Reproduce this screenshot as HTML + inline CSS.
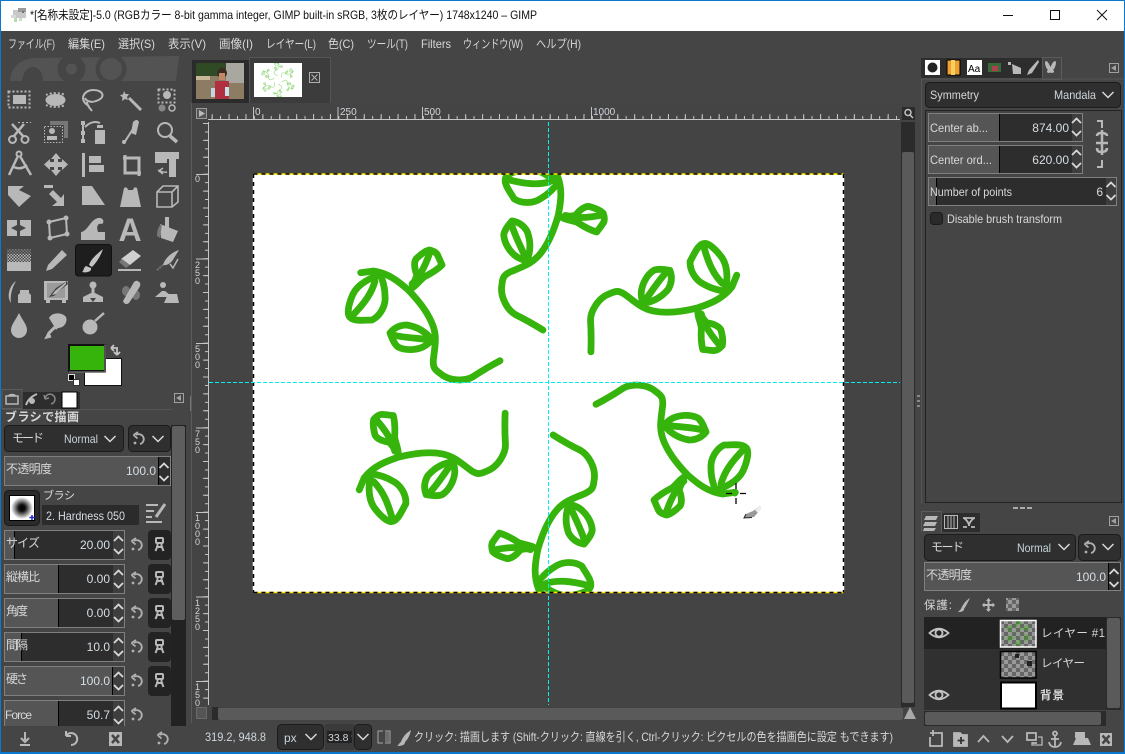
<!DOCTYPE html>
<html lang="ja">
<head>
<meta charset="utf-8">
<title>GIMP</title>
<style>
html,body{margin:0;padding:0;background:#454545;width:1125px;height:754px;overflow:hidden}
svg{display:block}
text{font-family:"Liberation Sans","Noto Sans CJK JP",sans-serif;font-size:12px;fill:#d8d8d8}
.r{text-anchor:end}
.s{font-size:11px}
.n{font-size:9px;fill:#cfd6dc}
.b{fill:none;stroke:#808080}
.ic{fill:#b8b8b8;stroke:none}
.st{fill:none;stroke:#b8b8b8;stroke-width:2}
</style>
</head>
<body>
<svg xmlns="http://www.w3.org/2000/svg" width="1125" height="754" viewBox="0 0 1125 754">
<defs>
<clipPath id="cv"><rect x="254" y="174" width="589" height="418"/></clipPath>
<clipPath id="zc"><rect x="327" y="731" width="25" height="12"/></clipPath>
<pattern id="chk" width="8" height="8" patternUnits="userSpaceOnUse"><rect width="8" height="8" fill="#666"/><rect width="4" height="4" fill="#999"/><rect x="4" y="4" width="4" height="4" fill="#999"/></pattern>
<pattern id="dit" width="3" height="3" patternUnits="userSpaceOnUse"><rect width="3" height="3" fill="#454545"/><rect width="1.500" height="1.500" fill="#b8b8b8"/><rect x="1.500" y="1.500" width="1.500" height="1.500" fill="#b8b8b8"/></pattern>
<g id="vine" fill="none" stroke="#36b40c" stroke-width="6.800" stroke-linecap="round" stroke-linejoin="round">
<path d="M500,360.7 C488,367 480,372 473,376.7 C466,381 450,382 440,373.3 C434,369 433,367 433.3,360 C435,345 437,338 433.3,326.7 C429,314 418,300 408.3,290 C398,281 388,273 373.3,271 L360.7,272.7"/>
<path d="M383,275 C372,276 358,284 353,294 C349,303 347,312 349,316 C352,322 364,320 372,320 C380,316 386,306 385,296 C385,288 383,282 382,279"/>
<path d="M375,281 C372,292 366,302 351,317"/>
<path d="M412,288 L417,275 C414,268 414,262 416,259 C420,255 425,251 429,250 C434,251 437,253 438,256 C440,260 441,263 442,265 C437,270 430,274 424,277 C420,280 416,286 412,288"/>
<path d="M412,284 C418,278 424,270 430,252"/>
<path d="M432,340 C426,332 418,327 407,325 C400,325 394,328 390,333 C392,338 394,344 398,347 C406,351 416,350 423,347 C427,345 430,342 432,340"/>
<path d="M393,335 C405,338 418,338 432,340"/>
</g>
<g id="art">
<use href="#vine"/>
<use href="#vine" transform="rotate(60 548 382.5)"/>
<use href="#vine" transform="rotate(120 548 382.5)"/>
<use href="#vine" transform="rotate(180 548 382.5)"/>
<use href="#vine" transform="rotate(240 548 382.5)"/>
<use href="#vine" transform="rotate(300 548 382.5)"/>
</g>
<g id="spin" fill="none" stroke="#d8d8d8" stroke-width="1.800"><polyline points="-4.500,-2 0,-6.500 4.500,-2"/><polyline points="-4.500,6 0,10.500 4.500,6"/></g>
<polyline id="chev" points="-5.5,-3 0,2.5 5.5,-3" fill="none" stroke="#d8d8d8" stroke-width="1.5"/>
<g id="reset" fill="none" stroke="#b0b0b0" stroke-width="1.8"><path d="M-3,-4 A5,5 0 1 1 1,5"/><path d="M-5.5,-4 L-1,-7 M-5.5,-4 L-1.5,-0.5"/><circle cx="-4" cy="4" r="1.4" fill="#b0b0b0" stroke="none"/></g>
<g id="link"><rect x="-11.5" y="-15" width="23" height="30" rx="4" fill="#232323"/><g fill="none" stroke="#b8b8b8" stroke-width="2"><rect x="-3.5" y="-7" width="7" height="5" rx="1"/><path d="M-2,-2 L-2,1 L-4,6 M2,-2 L2,1 L4,6 M-3.5,2 H3.5"/></g></g>
<g id="eye" fill="none" stroke="#c4c4c4" stroke-width="1.8"><path d="M-9.5,0 Q0,-8.5 9.5,0 Q0,8.5 -9.5,0 Z"/><circle r="3.5"/></g>
</defs>

<!-- window chrome -->
<rect width="1125" height="754" fill="#454545"/>
<rect width="1125" height="31" fill="#fff"/>
<rect width="1125" height="1" fill="#0b78d0"/>
<rect y="0" width="1" height="754" fill="#0b78d0"/>
<rect x="1124" y="0" width="1" height="754" fill="#0b78d0"/>
<rect y="752" width="1125" height="2" fill="#0b78d0"/>
<g transform="translate(11,8)"><rect x="2" y="2" width="13" height="8" fill="#c8c8c8"/><rect x="7" y="0" width="8" height="4" fill="#999"/><rect x="0" y="7" width="5" height="3" fill="#d8d8d8"/><rect x="3" y="10" width="3" height="4" fill="#bcd8b4"/><rect x="8" y="10" width="3" height="3" fill="#c8e0c0"/><rect x="11" y="3" width="2" height="2" fill="#777"/></g>
<text x="30" y="19" textLength="507" lengthAdjust="spacingAndGlyphs" style="fill:#111">*[名称未設定]-5.0 (RGBカラー 8-bit gamma integer, GIMP built-in sRGB, 3枚のレイヤー) 1748x1240 – GIMP</text>
<path d="M1003,15.5 H1013" stroke="#111" fill="none"/>
<rect x="1050.5" y="10.5" width="9" height="9" fill="none" stroke="#111"/>
<path d="M1097,10 L1107,20 M1107,10 L1097,20" stroke="#111" fill="none"/>

<!-- menu -->
<g>
<text x="8" y="48" textLength="47" lengthAdjust="spacingAndGlyphs">ファイル(F)</text>
<text x="68" y="48" textLength="37" lengthAdjust="spacingAndGlyphs">編集(E)</text>
<text x="118" y="48" textLength="37" lengthAdjust="spacingAndGlyphs">選択(S)</text>
<text x="168" y="48" textLength="38" lengthAdjust="spacingAndGlyphs">表示(V)</text>
<text x="219" y="48" textLength="34" lengthAdjust="spacingAndGlyphs">画像(I)</text>
<text x="266" y="48" textLength="50" lengthAdjust="spacingAndGlyphs">レイヤー(L)</text>
<text x="328" y="48" textLength="26" lengthAdjust="spacingAndGlyphs">色(C)</text>
<text x="367" y="48" textLength="41" lengthAdjust="spacingAndGlyphs">ツール(T)</text>
<text x="421" y="48" textLength="30" lengthAdjust="spacingAndGlyphs">Filters</text>
<text x="463" y="48" textLength="60" lengthAdjust="spacingAndGlyphs">ウィンドウ(W)</text>
<text x="536" y="48" textLength="45" lengthAdjust="spacingAndGlyphs">ヘルプ(H)</text>
</g>

<!-- wilber logo -->
<path d="M10,81 C11,66 22,58 36,58 L179,56 L176,81 Z" fill="#535353"/>
<path d="M22,81 C23,72 28,67 33,67 C39,67 43,73 43,81 Z" fill="#454545"/>
<circle cx="71.5" cy="69" r="14" fill="#454545"/><circle cx="71.5" cy="69" r="5.5" fill="#535353"/>
<circle cx="111" cy="69" r="15.5" fill="#454545"/><circle cx="111" cy="69" r="11" fill="#535353"/>

<!-- toolbox icons -->
<g class="ic">
<!-- row 1 -->
<rect x="8.5" y="91.5" width="21" height="16" fill="none" stroke="#b8b8b8" stroke-width="2" stroke-dasharray="2 2"/>
<rect x="13" y="95" width="13" height="9"/>
<ellipse cx="55.5" cy="100" rx="10" ry="6"/>
<path d="M46,95 A13,6 0 0 1 65,95 M46,105 A13,6 0 0 0 65,105" fill="none" stroke="#b8b8b8" stroke-width="2" stroke-dasharray="2 2"/>
<path d="M89,106 C78,100 84,90 93,90 C104,90 106,98 96,101 C91,103 86,101 85,98 M87,102 C87,106 90,108 92,111" class="st"/>
<path d="M124,91 L125.5,94 L129,94 L127,97 L128,100 L125,99 L122,101 L122.5,97.5 L120,95 L123,94.5 Z"/>
<path d="M129,98 L141,110" stroke="#b8b8b8" stroke-width="3" fill="none"/>
<rect x="158.5" y="89.5" width="16" height="13" fill="none" stroke="#b8b8b8" stroke-width="2" stroke-dasharray="2 2"/>
<circle cx="167" cy="95" r="4"/><circle cx="162" cy="108" r="3.5" fill="#888"/><circle cx="172" cy="108" r="3" fill="none" stroke="#b8b8b8" stroke-width="1.5"/>
<!-- row 2 -->
<g class="st"><circle cx="12.5" cy="139.5" r="3.5"/><circle cx="25" cy="139.5" r="3.5"/><path d="M14,136 L24,124 M23,136 L12,124" stroke-width="2.5"/></g>
<path d="M18,122.5 H31" stroke="#b8b8b8" stroke-dasharray="2 2" fill="none"/>
<path d="M50,121 H68 V138 H64 V125 H50 Z" fill="#777"/>
<rect x="44.5" y="126.5" width="18" height="16" fill="none" stroke="#b8b8b8" stroke-dasharray="1.5 1.5"/>
<circle cx="52" cy="131" r="3"/><path d="M47,140 V136 H57 V140 Z"/>
<rect x="81" y="121" width="4" height="4"/><rect x="81" y="131" width="4" height="4"/><rect x="81" y="139" width="4" height="4"/>
<path d="M83,125 V139 M85,127 C90,122 95,121 100,123" class="st" stroke-width="1.3"/>
<path d="M97,128 H103 V125 H97 Z M95,130 H105 V144 H95 Z"/>
<path d="M124,143 L133,129" fill="none" stroke="#b8b8b8" stroke-width="2"/>
<path d="M131,133 L133,122 Q137,118 139,122 L136,135 Z"/>
<circle cx="124" cy="142" r="2"/>
<circle cx="165" cy="130" r="7" class="st" stroke-width="3"/><path d="M170,136 L177,142" fill="none" stroke="#b8b8b8" stroke-width="3.5"/>
<!-- row 3 -->
<circle cx="19" cy="154" r="2.5" class="st" stroke-width="1.5"/>
<path d="M17.5,157 L9,175 M20.5,157 L31,175 M12,166 Q20,171 27,165" fill="none" stroke="#b8b8b8" stroke-width="2.5"/>
<path d="M56,153 L61,159 H58 V162 H62 V159 L68,164.5 L62,170 V167 H58 V170 H61 L56,176 L51,170 H54 V167 H50 V170 L44,164.5 L50,159 V162 H54 V159 H51 Z"/>
<rect x="82" y="153" width="3" height="24"/><rect x="89" y="156" width="12" height="7"/><rect x="89" y="165" width="15" height="7"/>
<path d="M125,155 V173 H141 M123,158 H139 V176" fill="none" stroke="#b8b8b8" stroke-width="3"/>
<path d="M155,152 H179 V159 H176 V177 H169 V159 H167 V163 H155 Z"/>
<path d="M158,170 Q164,173 167,172 M163,168 L159,171 L163,174" fill="none" stroke="#b8b8b8" stroke-width="1.5"/>
<!-- row 4 -->
<path d="M8,195 V186 H24 L19,190 L31,196 L19,207 L8,195 Z"/>
<path d="M44,185 H53 V188 H44 Z M53,190 L61,198 L64,194 V206 H52 L57,202 L49,194 Z"/>
<path d="M82,186 H92 L105,205 H82 Z"/>
<path d="M120,207 L124,188 Q127,186 128,190 H133 Q134,186 137,188 L141,207 Z"/>
<path d="M157,192 L163,186 H178 V202 L172,207 H157 Z M157,192 H172 V207 M172,192 L178,186" fill="none" stroke="#b8b8b8" stroke-width="1.6"/>
<!-- row 5 -->
<path d="M7,220 H17 V225 L11,228 L17,231 V236 H7 Z M20,220 H31 V236 H20 V231 L26,228 L20,225 Z"/>
<path d="M49,222 L66,218 L67,234 L50,238 Z" fill="none" stroke="#b8b8b8" stroke-width="2"/>
<circle cx="49" cy="222" r="2.5"/><circle cx="66" cy="218" r="2.5"/><circle cx="67" cy="234" r="2.5"/><circle cx="50" cy="238" r="2.5"/>
<path d="M81,240 V232 C88,231 90,220 98,218 C103,217 105,222 102,224 C98,223 96,226 98,232 H105 V240 Z"/>
<text x="118.500" y="241" style="font-size:32px;font-weight:bold;fill:#b8b8b8">A</text>
<path d="M165,217 H169 V229 H165 Z"/>
<path d="M160,224 L178,231 L173,242 L161,238 Z"/><path d="M157,236 C157,229 159,225 162,224 L160,238 Z" fill="#777"/>
<!-- row 6 -->
<rect x="7" y="249" width="24" height="5" fill="url(#dit)" opacity=".45"/>
<rect x="7" y="254" width="24" height="8" fill="url(#dit)"/>
<rect x="7" y="262" width="24" height="9"/>
<path d="M46,271 L48,265 L62,250 L67,255 L52,269 Z"/>
</g>
<rect x="75.500" y="244.500" width="36" height="31.500" rx="3" fill="#1e1e1e" stroke="#111"/>
<path d="M103,249 C97,254 91,259 89,265 L92,267 C97,262 101,255 103,249 Z M86,266 C83,268 84,271 82,272 C86,273 92,272 91,268 Z" fill="#c4c4c4"/>
<g class="ic">
<path d="M121,259 L133,250 L141,256 L130,265 Z" fill="#d0d0d0"/><path d="M122,259 L130,265 L126,268 L119,262 Z" fill="#777"/><rect x="118" y="269" width="23" height="2"/>
<path d="M179,250 C172,252 165,258 163,265 C168,266 172,262 174,258 Z"/><path d="M157,270 L163,265" stroke="#777" stroke-width="2" stroke-dasharray="2 1"/><path d="M170,264 L173,268 L178,259" fill="none" stroke="#b8b8b8" stroke-width="1.5"/>
<!-- row 7 -->
<path d="M16,281 C10,285 6,296 11,303 C10,295 12,288 16,281 Z"/><path d="M20,290 H29 V293 L31,295 V303 H18 V295 L20,293 Z"/>
<path d="M44,281 H68 V300 H44 Z"/><path d="M47,298 H65 V283 H47 Z" fill="#454545" opacity=".25"/>
<path d="M67,281 L56,288 L52,293 L49,297 L54,296 L59,291 L68,284 Z" fill="#454545"/><path d="M66,282 L55,291 L52,295 L56,294 L66,284 Z"/>
<rect x="46" y="300" width="4" height="3"/><rect x="62" y="300" width="4" height="3"/>
<circle cx="93" cy="285" r="3.500"/><rect x="91.500" y="288" width="3" height="5"/><path d="M83,302 V297 L91,293 H95 L103,297 V302 Z"/><path d="M90,298 H96 L93,302 Z" fill="#454545"/>
<ellipse cx="126" cy="291" rx="4" ry="5" fill="#777"/><ellipse cx="136" cy="295" rx="4" ry="5" fill="#777"/>
<path d="M123,301 L134,282 Q137,279 140,283 Q141,285 139,288 L129,303 Q126,305 124,303 Z"/>
<circle cx="163" cy="285" r="3"/><path d="M155,297 L162,291 H165 L170,295 V297 Z"/><path d="M168,294 H177 L179,303 H164 Z"/>
<!-- row 8 -->
<path d="M19,313 C23,321 27,325 27,330 A8,8 0 0 1 11,330 C11,325 15,321 19,313 Z"/>
<path d="M49,318 C52,312 62,312 66,317 C68,322 64,328 58,328 L56,330 L54,326 Z"/><path d="M55,327 L49,333 L47,337 L51,336" stroke="#b8b8b8" stroke-width="3" fill="none"/>
<circle cx="90" cy="327" r="7.500"/><path d="M95,321 L104,313" stroke="#b8b8b8" stroke-width="2.500" fill="none"/>
</g>

<!-- fg / bg -->
<rect x="84.500" y="358.500" width="37" height="27" fill="#fff" stroke="#111"/>
<rect x="68.500" y="344.500" width="37" height="27" fill="#36b40c" stroke="#111"/>
<rect x="69.500" y="345.500" width="35" height="25" fill="none" stroke="#111"/>
<path d="M105,344.500 V372 H69" fill="none" stroke="#666" stroke-width="1.500"/>
<path d="M111,348 H117 V355 M111,348 L114,345 M111,348 L114,351 M117,355 L114,352 M117,355 L120,352" fill="none" stroke="#c4c4c4" stroke-width="1.800"/>
<rect x="68.500" y="374.500" width="6" height="6" fill="#000" stroke="#ddd"/>
<rect x="73.500" y="379.500" width="6" height="6" fill="#fff" stroke="#333"/>

<!-- tool options tabs -->
<rect x="22" y="392" width="58" height="17" fill="#2d2d2d"/>
<rect x="2" y="389.500" width="20" height="19" fill="#454545" stroke="#5c5c5c"/>
<path d="M6,396 H18 V404 H6 Z M8,396 Q12,393 16,396" fill="none" stroke="#b8b8b8" stroke-width="1.500"/>
<path d="M26,405 C28,399 32,396 37,394" stroke="#b8b8b8" stroke-width="2" fill="none"/><circle cx="32" cy="401" r="3" fill="#b8b8b8"/>
<path d="M45,399 A5,5 0 1 1 51,404 M45,399 L44,395 M45,399 L49,398" stroke="#888" stroke-width="1.500" fill="none"/>
<rect x="62" y="392" width="15" height="16" fill="#fff" stroke="#000"/>
<rect x="174.500" y="393.500" width="9" height="9" fill="none" stroke="#a0a0a0"/><path d="M181,395 L176,398 L181,401 Z" fill="#a0a0a0"/>
<rect x="190" y="396" width="1.500" height="15" fill="#777"/>
<rect x="191" y="103" width="1" height="620" fill="#5a5a5a"/>

<!-- tool options -->
<rect x="2" y="409" width="170" height="1" fill="#555"/>
<text x="5" y="421" textLength="74" style="font-weight:bold">ブラシで描画</text>
<rect x="4.500" y="425.500" width="119" height="26" rx="4" fill="#2f2f2f" stroke="#1b1b1b"/>
<text x="12" y="442" textLength="32">モード</text>
<text x="64" y="443" textLength="34" lengthAdjust="spacingAndGlyphs" style="fill:#c8d4dc">Normal</text>
<use href="#chev" x="110" y="439"/>
<rect x="128.500" y="425.500" width="42" height="26" rx="4" fill="#2f2f2f" stroke="#1b1b1b"/>
<use href="#reset" x="139" y="439"/><use href="#chev" x="158" y="439"/>
<rect x="4.500" y="456.500" width="166" height="29" fill="#555" stroke="#808080"/>
<rect x="158" y="457" width="12" height="28" fill="#2e2e2e"/><rect x="158" y="457" width="1" height="28" fill="#000"/>
<text x="6" y="473" textLength="46">不透明度</text>
<text x="156" y="475" class="r" style="fill:#d6dee4">100.0</text>
<use href="#spin" x="164" y="470"/>
<rect x="4.500" y="490.500" width="35" height="35" rx="4" fill="#2a2a2a" stroke="#1b1b1b"/>
<defs><radialGradient id="br"><stop offset="0" stop-color="#000"/><stop offset=".3" stop-color="#111"/><stop offset="1" stop-color="#fff"/></radialGradient></defs>
<rect x="9.500" y="495.500" width="25" height="25" fill="#fff" stroke="#000"/>
<circle cx="22" cy="508" r="11" fill="url(#br)"/>
<path d="M29.500,517.500 H35 M32,515 V520" stroke="#1a2ad0" stroke-width="1.500"/>
<text x="43" y="499" textLength="32" style="font-size:11px">ブラシ</text>
<rect x="42" y="505" width="97" height="20" fill="#2b2b2b"/>
<text x="46" y="520" textLength="79" lengthAdjust="spacingAndGlyphs" style="fill:#d6dee4">2. Hardness 050</text>
<g fill="none" stroke="#b8b8b8" stroke-width="2"><path d="M146,505 H158 M146,511 H154 M146,517 H152 M146,522 H162"/><path d="M156,517 L165,504" stroke-width="3"/></g>

<!-- left sliders -->
<g>
<rect x="4.500" y="530.500" width="120" height="29" fill="#2d2d2d" stroke="#808080"/><rect x="5" y="531" width="9" height="28" fill="#555"/><rect x="14" y="531" width="1" height="28" fill="#000"/>
<rect x="113" y="531" width="11" height="28" fill="#3e3e3e"/><use href="#spin" x="118.500" y="543"/>
<text x="6" y="547" textLength="34">サイズ</text><text x="110" y="549" class="r" style="fill:#d6dee4">20.00</text>
<use href="#reset" x="137" y="545"/><use href="#link" x="159.500" y="545"/>

<rect x="4.500" y="564.500" width="120" height="29" fill="#2d2d2d" stroke="#808080"/><rect x="5" y="565" width="53" height="28" fill="#555"/><rect x="58" y="565" width="1" height="28" fill="#000"/>
<rect x="113" y="565" width="11" height="28" fill="#3e3e3e"/><use href="#spin" x="118.500" y="577"/>
<text x="6" y="581" textLength="34">縦横比</text><text x="110" y="583" class="r" style="fill:#d6dee4">0.00</text>
<use href="#reset" x="137" y="579"/><use href="#link" x="159.500" y="579"/>

<rect x="4.500" y="598.500" width="120" height="29" fill="#2d2d2d" stroke="#808080"/><rect x="5" y="599" width="53" height="28" fill="#555"/><rect x="58" y="599" width="1" height="28" fill="#000"/>
<rect x="113" y="599" width="11" height="28" fill="#3e3e3e"/><use href="#spin" x="118.500" y="611"/>
<text x="6" y="615" textLength="22">角度</text><text x="110" y="617" class="r" style="fill:#d6dee4">0.00</text>
<use href="#reset" x="137" y="613"/><use href="#link" x="159.500" y="613"/>

<rect x="4.500" y="632.500" width="120" height="29" fill="#2d2d2d" stroke="#808080"/><rect x="5" y="633" width="16" height="28" fill="#555"/><rect x="21" y="633" width="1" height="28" fill="#000"/>
<rect x="113" y="633" width="11" height="28" fill="#3e3e3e"/><use href="#spin" x="118.500" y="645"/>
<text x="6" y="649" textLength="22">間隔</text><text x="110" y="651" class="r" style="fill:#d6dee4">10.0</text>
<use href="#reset" x="137" y="647"/><use href="#link" x="159.500" y="647"/>

<rect x="4.500" y="666.500" width="120" height="29" fill="#2d2d2d" stroke="#808080"/><rect x="5" y="667" width="107" height="28" fill="#555"/><rect x="112" y="667" width="1" height="28" fill="#000"/>
<rect x="113" y="667" width="11" height="28" fill="#3e3e3e"/><use href="#spin" x="118.500" y="679"/>
<text x="6" y="683" textLength="22">硬さ</text><text x="110" y="685" class="r" style="fill:#d6dee4">100.0</text>
<use href="#reset" x="137" y="681"/><use href="#link" x="159.500" y="681"/>

<rect x="4.500" y="700.500" width="120" height="29" fill="#2d2d2d" stroke="#808080"/><rect x="5" y="701" width="53" height="28" fill="#555"/><rect x="58" y="701" width="1" height="28" fill="#000"/>
<rect x="113" y="701" width="11" height="28" fill="#3e3e3e"/><use href="#spin" x="118.500" y="713"/>
<text x="5" y="719" textLength="27">Force</text><text x="110" y="719" class="r" style="fill:#d6dee4">50.7</text>
<use href="#reset" x="137" y="715"/>
</g>
<!-- opts scrollbar -->
<rect x="171" y="425" width="15" height="301" fill="#222"/>
<rect x="172" y="426" width="13" height="194" rx="2" fill="#5e5e5e"/>
<rect x="1" y="726" width="189" height="26" fill="#454545"/>
<g fill="none" stroke="#b8b8b8" stroke-width="2">
<path d="M25,732 V740 M21,738 L25,742 L29,738 M20,745 H30" /><path d="M66,736 A6,6 0 1 1 71,745 M66,736 V731 M66,736 H71"/>
</g>
<path d="M109,732 H122 V746 H109 Z" fill="#b8b8b8"/><path d="M112,735 L119,743 M119,735 L112,743" stroke="#454545" stroke-width="2.500"/>
<use href="#reset" x="163" y="739"/>

<!-- image tabs -->
<rect x="192" y="60" width="57" height="43" fill="#2b2b2b"/>
<defs><clipPath id="ph"><rect x="196" y="63" width="48" height="36"/></clipPath></defs>
<g clip-path="url(#ph)">
<rect x="196" y="63" width="48" height="36" fill="#8c7c64"/>
<rect x="196" y="63" width="48" height="13" fill="#2f4a24"/>
<rect x="226" y="63" width="18" height="20" fill="#a8a8a0"/>
<rect x="196" y="76" width="14" height="4" fill="#c8b898"/>
<circle cx="222" cy="73" r="5" fill="#3a2a20"/><rect x="219" y="73" width="6" height="7" fill="#c08868"/>
<rect x="215" y="81" width="14" height="18" fill="#b03040"/>
<rect x="211" y="88" width="4" height="9" fill="#c0d8e0"/><rect x="225" y="87" width="4" height="9" fill="#c8e0e8"/>
</g>
<rect x="249.500" y="57.500" width="81" height="46" fill="#3c3c3c" stroke="#555"/>
<rect x="254" y="63" width="48" height="34" fill="#fff"/>
<g transform="translate(254,63) scale(.0815) translate(-254,-174)" opacity=".55" clip-path="url(#cv)"><use href="#art"/></g>
<rect x="309.500" y="72.500" width="10" height="10" fill="none" stroke="#b0b0b0"/><path d="M311.500,74.500 L317.500,80.500 M317.500,74.500 L311.500,80.500" stroke="#b0b0b0"/>

<!-- image area -->
<rect x="192" y="103" width="723" height="620" fill="#444"/>
<rect x="196.500" y="108.500" width="10" height="10" fill="#555" stroke="#999"/><path d="M199,110 L205,113.500 L199,117 Z" fill="#bbb"/>
<!-- h ruler -->
<path d="M208,119.500 H900" stroke="#c4c4c4"/>
<path d="M211,117.500 H900" stroke="#c4c4c4" stroke-width="3" stroke-dasharray="1 7.450" stroke-dashoffset="-.6" fill="none"/>
<path d="M211.700,116.500 H900" stroke="#c4c4c4" stroke-width="5" stroke-dasharray="1 15.900" fill="none"/>
<path d="M253.500,107 V120 M338,107 V120 M422.500,107 V120 M591.500,107 V120" stroke="#c4c4c4" fill="none"/>
<g>
<text x="255" y="115" class="n" style="font-size:10px">0</text><text x="340" y="115" class="n" style="font-size:10px">250</text><text x="424" y="115" class="n" style="font-size:10px">500</text><text x="593" y="115" class="n" style="font-size:10px">1000</text>
</g>
<rect x="900" y="103" width="15" height="19" fill="#444"/>
<rect x="902" y="107" width="13" height="13" fill="#2b2b2b"/><circle cx="908" cy="112.500" r="3" fill="none" stroke="#c4c4c4" stroke-width="1.500"/><path d="M910,115 L913,118" stroke="#c4c4c4" stroke-width="1.500"/>
<!-- v ruler -->
<path d="M208.500,122 V705" stroke="#c4c4c4"/>
<path d="M206.500,123 V705" stroke="#c4c4c4" stroke-width="3" stroke-dasharray="1 7.450" fill="none"/>
<path d="M205.500,123 V705" stroke="#c4c4c4" stroke-width="5" stroke-dasharray="1 15.900" fill="none"/>
<path d="M196,174.500 H208 M196,259 H208 M196,343.500 H208 M196,428 H208 M196,512.500 H208 M196,597 H208 M196,681.500 H208" stroke="#c4c4c4" fill="none"/>
<g>
<text x="195" y="182" class="n">0</text>
<text x="195" y="268" class="n">2</text><text x="195" y="276" class="n">5</text><text x="195" y="284" class="n">0</text>
<text x="195" y="352" class="n">5</text><text x="195" y="360" class="n">0</text><text x="195" y="368" class="n">0</text>
<text x="195" y="437" class="n">7</text><text x="195" y="445" class="n">5</text><text x="195" y="453" class="n">0</text>
<text x="195" y="521" class="n">1</text><text x="195" y="529" class="n">0</text><text x="195" y="537" class="n">0</text><text x="195" y="545" class="n">0</text>
<text x="195" y="606" class="n">1</text><text x="195" y="614" class="n">2</text><text x="195" y="622" class="n">5</text><text x="195" y="630" class="n">0</text>
<text x="195" y="690" class="n">1</text><text x="195" y="698" class="n">5</text><text x="195" y="706" class="n">0</text>
</g>
<rect x="192" y="120" width="16" height="2" fill="#444"/>

<!-- canvas -->
<rect x="254" y="174" width="589" height="418" fill="#fff"/>
<g clip-path="url(#cv)"><use href="#art"/></g>
<g fill="none" stroke-width="1.500">
<path d="M253.500,174 H843.500 M253.500,592.500 H843.500" stroke="#ffe600"/>
<path d="M253.500,174 H843.500 M253.500,592.500 H843.500" stroke="#000" stroke-dasharray="4 4"/>
<path d="M253.500,174 V592.500 M843.500,174 V592.500" stroke="#fff"/>
<path d="M253.500,174 V592.500 M843.500,174 V592.500" stroke="#000" stroke-dasharray="4 4"/>
</g>
<path d="M548.500,122 V705 M209,382.500 H900" stroke="#00f0f0" stroke-dasharray="4 2" fill="none"/>
<!-- cursor -->
<circle cx="735" cy="493.500" r="3" fill="#36b40c"/>
<path d="M736,483 V489 M736,498 V504 M726,493.500 H732 M740,493.500 H746" stroke="#000" stroke-width="1.300" fill="none"/>
<path d="M760,506 L753,511 L746,514 L744,518 L754,517 L761,509 Z" fill="#999"/><path d="M760,506 L755,510 L758,513 L761,509 Z" fill="#eee"/><path d="M746,514 L744,518 L752,517.500" stroke="#222" fill="none"/>

<!-- canvas scrollbars -->
<rect x="901" y="122" width="14" height="585" fill="#2b2b2b"/>
<rect x="902" y="152" width="12" height="551" rx="2" fill="#5a5a5a"/>
<rect x="212" y="707" width="691" height="13" fill="#2b2b2b"/>
<rect x="218" y="707.500" width="685" height="12.500" rx="2" fill="#5a5a5a"/>
<rect x="196.500" y="707.500" width="10" height="11" fill="#555" stroke="#888" stroke-dasharray="1 1"/>
<path d="M910,707 L916,719 H904 Z" fill="#a8a8a8"/>

<!-- status bar -->
<rect x="192" y="722" width="723" height="30" fill="#454545"/>
<text x="205" y="741" textLength="61" lengthAdjust="spacingAndGlyphs" style="fill:#cfd6dc">319.2, 948.8</text>
<rect x="277.500" y="724.500" width="46" height="25" rx="4" fill="#2f2f2f" stroke="#1b1b1b"/>
<text x="284" y="742" style="fill:#c8d4dc">px</text><use href="#chev" x="311" y="737"/>
<rect x="325" y="724" width="29" height="26" fill="#3a3a3a"/>
<rect x="327" y="731" width="25" height="12" fill="#222"/>
<g clip-path="url(#zc)"><text x="328" y="741" style="font-size:10.500px;fill:#cfd6dc">33.8 %</text></g>
<rect x="354.500" y="724.500" width="17" height="25" rx="4" fill="#2f2f2f" stroke="#1b1b1b"/><use href="#chev" x="363" y="737"/>
<path d="M383,731 H378 V743 H383 M385,731 H390 V743 H385" fill="none" stroke="#a8a8a8"/><rect x="385" y="732" width="4" height="10" fill="#888" opacity=".6"/>
<path d="M411,730 C406,733 402,738 401,742 C399,743 399,745 397,746 C402,746 405,745 405,742 C408,739 410,735 411,730 Z" fill="#b8b8b8"/>
<text x="414" y="741" textLength="479" lengthAdjust="spacingAndGlyphs" style="font-size:12px;fill:#d8d8d8">クリック: 描画します (Shift-クリック: 直線を引く, Ctrl-クリック: ピクセルの色を描画色に設定 もできます)</text>

<!-- right dock -->
<rect x="917" y="395" width="3" height="2" fill="#888"/><rect x="917" y="400" width="3" height="2" fill="#888"/><rect x="917" y="405" width="3" height="2" fill="#888"/>
<rect x="921" y="58" width="127" height="20" fill="#2d2d2d"/>
<rect x="1042.500" y="57.500" width="19" height="22" fill="#454545" stroke="#5c5c5c"/>
<rect x="925" y="60" width="15" height="15" fill="#fff"/><circle cx="932.500" cy="67.500" r="5" fill="#222"/>
<rect x="947" y="60" width="13" height="15" fill="#f0a030" stroke="#000"/><rect x="951" y="60" width="4" height="15" fill="#f8d060"/>
<rect x="967" y="60" width="15" height="15" fill="#fff"/><text x="968" y="72" style="font-size:10px;fill:#000">Aa</text>
<rect x="988" y="63" width="13" height="9" fill="#3a6a3a"/><rect x="992" y="66" width="6" height="5" fill="#b04050"/>
<path d="M1008,62 h3 v3 h-3 z M1012,64 L1021,68 V74 H1013 Z" fill="#b8b8b8"/>
<path d="M1038,60 L1029,70 L1027,75 L1032,73 L1039,62" fill="#b8b8b8"/>
<path d="M1050.500,67 C1048,61 1046,60 1045,62 C1045,65 1046,68 1048,70 C1046,71 1047,74 1050.500,72.500 C1054,74 1055,71 1053,70 C1055,68 1056,65 1056,62 C1055,60 1053,61 1050.500,67 Z" fill="#b8b8b8"/>
<rect x="1109.500" y="63.500" width="9" height="9" fill="none" stroke="#a0a0a0"/><path d="M1116,65 L1111,68 L1116,71 Z" fill="#a0a0a0"/>
<path d="M921.500,79 V503.500 M921.500,79 H1124" stroke="#555" fill="none"/>
<rect x="925.500" y="82.500" width="195" height="25" rx="4" fill="#2f2f2f" stroke="#1b1b1b"/>
<text x="930" y="99" textLength="49" lengthAdjust="spacingAndGlyphs">Symmetry</text>
<text x="1054" y="99" textLength="42" lengthAdjust="spacingAndGlyphs" style="fill:#cfd6dc">Mandala</text>
<use href="#chev" x="1108" y="95"/>
<rect x="925.500" y="110.500" width="196" height="392" fill="#454545" stroke="#222"/>
<rect x="928.500" y="113.500" width="154" height="28" fill="#2d2d2d" stroke="#808080"/><rect x="929" y="114" width="70" height="27" fill="#555"/><rect x="999" y="114" width="1" height="27" fill="#000"/><rect x="1072" y="114" width="10" height="27" fill="#3e3e3e"/><use href="#spin" x="1076.500" y="125"/>
<text x="930" y="132" textLength="58" lengthAdjust="spacingAndGlyphs">Center ab...</text><text x="1069" y="132" class="r" style="fill:#d6dee4">874.00</text>
<rect x="928.500" y="145.500" width="154" height="28" fill="#2d2d2d" stroke="#808080"/><rect x="929" y="146" width="70" height="27" fill="#555"/><rect x="999" y="146" width="1" height="27" fill="#000"/><rect x="1072" y="146" width="10" height="27" fill="#3e3e3e"/><use href="#spin" x="1076.500" y="157"/>
<text x="930" y="164" textLength="62" lengthAdjust="spacingAndGlyphs">Center ord...</text><text x="1069" y="164" class="r" style="fill:#d6dee4">620.00</text>
<rect x="928.500" y="177.500" width="188" height="28" fill="#2d2d2d" stroke="#808080"/><rect x="929" y="178" width="7" height="27" fill="#555"/><rect x="936" y="178" width="1" height="27" fill="#000"/><rect x="1106" y="178" width="10" height="27" fill="#3e3e3e"/><use href="#spin" x="1111" y="189"/>
<text x="930" y="196" textLength="82" lengthAdjust="spacingAndGlyphs">Number of points</text><text x="1103" y="196" class="r" style="fill:#d6dee4">6</text>
<path d="M1097,121 H1102 V128 M1102,160 V167 H1097" fill="none" stroke="#b8b8b8" stroke-width="2"/>
<path d="M1097,136 Q1097,133 1101,133 Q1107,133 1107,136 M1097,148 Q1097,152 1101,152 Q1107,152 1107,148 M1102,130 V155 M1096,143 H1108" fill="none" stroke="#b8b8b8" stroke-width="2.500"/>
<rect x="930.500" y="212.500" width="12" height="12" rx="3" fill="#2a2a2a" stroke="#1b1b1b"/>
<text x="947" y="223" textLength="115" lengthAdjust="spacingAndGlyphs">Disable brush transform</text>

<!-- layers dock -->
<rect x="1013" y="507" width="5" height="2" fill="#aaa"/><rect x="1020" y="507" width="5" height="2" fill="#aaa"/><rect x="1027" y="507" width="5" height="2" fill="#aaa"/>
<rect x="941" y="513" width="39" height="19" fill="#2d2d2d"/>
<path d="M921.500,532 V511.500 H941.500 V533" fill="none" stroke="#5c5c5c"/>
<path d="M926,516 H938 L936,520 H924 Z M925,522 H937 L935,526 H923 Z M924,528 H936 L934,531 H923 Z" fill="#b8b8b8"/>
<rect x="944.500" y="515.500" width="13" height="13" fill="none" stroke="#b8b8b8"/><path d="M948,516 V528 M951,516 V528 M954,516 V528" stroke="#b8b8b8"/>
<path d="M963,518 H975 M964,518 Q969,522 969,526 M974,518 Q969,522 969,526 M963,527 H967 M971,527 H975" stroke="#b8b8b8" stroke-width="1.800" fill="none"/>
<rect x="1109.500" y="516.500" width="9" height="9" fill="none" stroke="#a0a0a0"/><path d="M1116,518 L1111,521 L1116,524 Z" fill="#a0a0a0"/>
<rect x="924.500" y="534.500" width="151" height="26" rx="4" fill="#2f2f2f" stroke="#1b1b1b"/>
<text x="931" y="551" textLength="33">モード</text><text x="1017" y="552" textLength="34" lengthAdjust="spacingAndGlyphs" style="fill:#c8d4dc">Normal</text><use href="#chev" x="1064" y="547"/>
<rect x="1078.500" y="534.500" width="42" height="26" rx="4" fill="#2f2f2f" stroke="#1b1b1b"/><use href="#reset" x="1090" y="548"/><use href="#chev" x="1108" y="547"/>
<rect x="924.500" y="562.500" width="196" height="28" fill="#555" stroke="#808080"/><rect x="1108" y="563" width="12" height="27" fill="#2e2e2e"/><rect x="1108" y="563" width="1" height="27" fill="#000"/>
<text x="926" y="579" textLength="46">不透明度</text><text x="1106" y="581" class="r" style="fill:#d6dee4">100.0</text><use href="#spin" x="1114" y="576"/>
<text x="924" y="609" textLength="28" style="font-size:11.500px">保護:</text>
<path d="M970,598 C965,601 962,606 961,609 C960,610 959,611 958,612 C962,612 964,611 964,609 C966,606 968,602 970,598 Z" fill="#b8b8b8"/>
<path d="M988.500,598 L991,601 H989.500 V604 H992.500 V602.500 L995,605 L992.500,607.500 V606 H989.500 V609 H991 L988.500,612 L986,609 H987.500 V606 H984.500 V607.500 L982,605 L984.500,602.500 V604 H987.500 V601 H986 Z" fill="#b8b8b8"/>
<rect x="1006" y="598" width="13" height="13" fill="url(#chk)"/>
<!-- layer list -->
<rect x="924" y="617" width="182" height="93" fill="#303030"/>
<rect x="924" y="617" width="182" height="32" fill="#222"/>
<use href="#eye" x="939" y="633"/><use href="#eye" x="939" y="695"/>
<rect x="1000.500" y="620.500" width="35.500" height="26.500" fill="url(#chk)" stroke="#fff" stroke-width="1.500"/>
<g transform="translate(1001,621) scale(.0585) translate(-254,-174)" clip-path="url(#cv)"><use href="#art"/></g>
<rect x="1000.500" y="651.500" width="35.500" height="26.500" fill="url(#chk)" stroke="#000" stroke-width="1.500"/>
<rect x="1015" y="654" width="4" height="4" fill="#222"/><rect x="1027" y="661" width="5" height="5" fill="#222"/>
<rect x="1001" y="682.500" width="35" height="26" fill="#fff" stroke="#000" stroke-width="2"/>
<text x="1041" y="637" textLength="64" style="font-size:11.500px">レイヤー #1</text>
<text x="1041" y="667" textLength="44" style="font-size:11.500px">レイヤー</text>
<text x="1040" y="699" textLength="24" style="font-size:11.500px;font-weight:bold">背景</text>
<rect x="1106" y="617" width="15" height="93" fill="#2b2b2b"/>
<rect x="1107" y="618" width="13" height="90" rx="2" fill="#5a5a5a"/>
<rect x="924" y="711" width="182" height="15" fill="#2b2b2b"/>
<rect x="925" y="712" width="176" height="13" rx="2" fill="#5a5a5a"/>
<g fill="none" stroke="#b8b8b8" stroke-width="1.800">
<path d="M931,733 H942 V746 H930 V737 M933,730 V736 M930,733 H936"/>
<path d="M954,733 H960 L962,735 H967 V746 H954 Z" fill="#b8b8b8"/><path d="M961,737 V744 M957.500,740.500 H964.500" stroke="#333"/>
<path d="M978,742 L983.500,736 L989,742"/>
<path d="M1002,736 L1007.500,742 L1013,736"/>
<path d="M1027,733 H1036 V740 H1027 Z M1032,743 H1037"/><path d="M1038,737 H1042 V745 H1032 V742" stroke-width="1.300"/>
<path d="M1055,736 V746 M1051,739 H1059 M1049,742 Q1050,747 1055,747 Q1060,747 1061,742"/><circle cx="1055" cy="733.500" r="2"/>
</g>
<path d="M1075,732 H1085 V738 H1088 L1091,745 H1073 L1076,738 H1075 Z" fill="#b8b8b8"/>
<path d="M1100,733 H1112 V746 H1100 Z" fill="#b8b8b8"/><path d="M1102.500,735.500 L1109.500,743.500 M1109.500,735.500 L1102.500,743.500" stroke="#454545" stroke-width="2.500"/>
</svg>
</body>
</html>
